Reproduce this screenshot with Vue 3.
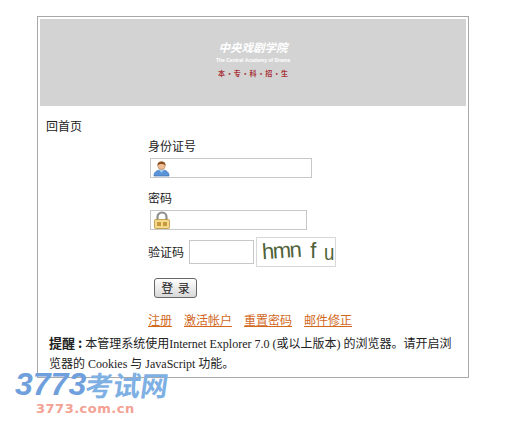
<script setup>
const links = ['注册', '激活帐户', '重置密码', '邮件修正']
const recruit = ['本', '·', '专', '·', '科', '·', '招', '·', '生']
</script>

<template>
  <div class="page">
    <div class="card">
      <header class="banner">
        <div class="school">中央戏剧学院</div>
        <div class="english">The Central Academy of Drama</div>
        <div class="recruit"><span v-for="(c, i) in recruit" :key="i">{{ c }}</span></div>
      </header>
      <a class="home">回首页</a>
      <form class="form" @submit.prevent>
        <label class="label">身份证号</label>
        <div class="field wide">
          <svg class="icon" viewBox="0 0 18 18" width="17" height="17">
            <path d="M1 17c0-4 2.500-6.500 8-6.500s8 2.500 8 6.500z" fill="#5b93d8" stroke="#3a6db0" stroke-width=".7"/>
            <path d="M6.500 10.500 9 13.500l2.500-3z" fill="#a5d2f2"/>
            <circle cx="9" cy="6" r="4" fill="#eebd94" stroke="#a8714a" stroke-width=".5"/>
            <path d="M4.800 6C4.500 2.500 6.500 1.500 9 1.500s4.500 1 4.200 4.500C12 4.500 10 4.300 9 4.300S6 4.500 4.800 6z" fill="#8c4f24"/>
          </svg>
        </div>
        <label class="label second">密码</label>
        <div class="field narrow">
          <svg class="icon" viewBox="0 0 18 18" width="18" height="18">
            <path d="M4.500 9V6a4.500 4.500 0 0 1 9 0v3" fill="none" stroke="#8f8f8f" stroke-width="2.200"/>
            <rect x="1.500" y="8.500" width="15" height="9" rx="1" fill="#f3d98c" stroke="#b88f3a" stroke-width=".8"/>
            <rect x="4" y="11" width="4" height="4" fill="#c99a3c"/>
            <rect x="10" y="11" width="4" height="4" fill="#c99a3c"/>
          </svg>
        </div>
        <div class="captcha-row">
          <label class="captcha-label">验证码</label>
          <div class="captcha-input"></div>
          <div class="captcha-image">
            <span class="c1">hmn</span><span class="c2">f</span><span class="c3">u</span>
          </div>
        </div>
        <button class="submit" type="submit">登 录</button>
        <nav class="links">
          <a v-for="link in links" :key="link" class="link">{{ link }}</a>
        </nav>
      </form>
      <p class="notice"><b>提醒 :</b> 本管理系统使用Internet Explorer 7.0 (或以上版本) 的浏览器。请开启浏览器的 Cookies 与 JavaScript 功能。</p>
    </div>
    <div class="watermark">
      <div class="wm-title"><span class="wm-num">3773</span><span class="wm-cn">考试网</span></div>
      <div class="wm-url">3773.com.cn</div>
    </div>
  </div>
</template>

<style>
html, body { margin: 0; background: #fff; }
</style>

<style scoped>
.page {
  position: relative;
  width: 527px;
  height: 433px;
  overflow: hidden;
  padding: 16px 0 0 37px;
  box-sizing: border-box;
  font-family: "Liberation Serif", "Noto Sans CJK SC", serif;
  font-size: 12px;
  color: #222;
}
.card {
  width: 432px;
  height: 362px;
  box-sizing: border-box;
  border: 1px solid #a8a8a8;
  padding: 2px;
}
.banner {
  height: 87px;
  background: #d3d3d3;
  display: flex;
  flex-direction: column;
  align-items: center;
  padding-top: 20px;
  box-sizing: border-box;
}
.school {
  color: #fff;
  font-size: 11.500px;
  font-weight: bold;
  font-style: italic;
  line-height: 16px;
  font-family: "Noto Sans CJK SC", serif;
}
.english {
  color: #fff;
  font-family: "Liberation Sans", sans-serif;
  font-size: 5px;
  font-weight: bold;
  line-height: 6px;
  margin-top: 2px;
  white-space: nowrap;
}
.recruit {
  display: flex;
  justify-content: space-between;
  width: 70px;
  color: #a8343a;
  font-family: "Noto Sans CJK SC", sans-serif;
  font-size: 7px;
  font-weight: bold;
  line-height: 10px;
  margin-top: 5px;
}
.home {
  display: block;
  margin: 12px 0 0 6px;
  font-size: 12px;
  line-height: 16px;
  font-family: "Noto Sans CJK SC", sans-serif;
}
.form {
  margin-left: 108px;
  margin-top: 4px;
  font-family: "Noto Sans CJK SC", sans-serif;
}
.label {
  display: block;
  line-height: 16px;
}
.second { margin-top: 12px; }
.field {
  margin-top: 4px;
  height: 20px;
  box-sizing: border-box;
  border: 1px solid #c8c8c8;
  display: flex;
  align-items: center;
  padding-left: 2px;
  margin-left: 2px;
}
.wide { width: 162px; }
.narrow { width: 157px; }
.icon { display: block; }
.captcha-row {
  display: flex;
  align-items: center;
  margin-top: 7px;
}
.captcha-label { line-height: 16px; width: 41px; }
.captcha-input {
  width: 65px;
  height: 24px;
  box-sizing: border-box;
  border: 1px solid #c8c8c8;
}
.captcha-image {
  width: 80px;
  height: 30px;
  box-sizing: border-box;
  border: 1px solid #d8d8d8;
  margin-left: 2px;
  color: #4f6339;
  font-family: "Liberation Sans", sans-serif;
  font-size: 22px;
  line-height: 26px;
  padding-left: 5px;
  white-space: nowrap;
  display: flex;
}
.c1 { letter-spacing: -1.500px; transform: rotate(-4deg); }
.c2 { margin-left: 10px; }
.c3 { margin-left: 7px; transform: translateY(2px) scaleX(.85); }
.submit {
  display: block;
  margin: 11px 0 0 6px;
  width: 43px;
  height: 20px;
  box-sizing: border-box;
  padding: 0;
  border: 1px solid #666;
  border-radius: 3px;
  background: linear-gradient(#ffffff, #d8d8d8);
  font-family: "Noto Sans CJK SC", sans-serif;
  font-size: 12px;
  line-height: 16px;
  word-spacing: 2px;
  color: #222;
}
.links {
  display: flex;
  gap: 12px;
  margin-top: 14px;
  line-height: 16px;
}
.link { color: #d2691e; text-decoration: underline; }
.notice {
  margin: 5px 0 0 9px;
  width: 408px;
  line-height: 20px;
}
.notice b { font-family: "Noto Sans CJK SC", sans-serif; font-size: 13px; }
.watermark {
  position: absolute;
  left: 15px;
  top: 369px;
  width: 170px;
}
.wm-title {
  display: flex;
  align-items: center;
  height: 30px;
  white-space: nowrap;
  color: #6f9fdc;
  font-weight: bold;
}
.wm-num {
  font-family: "Liberation Sans", sans-serif;
  font-size: 32px;
  font-style: italic;
  line-height: 30px;
}
.wm-cn {
  font-family: "Noto Sans CJK SC", sans-serif;
  font-size: 27.500px;
  line-height: 30px;
  color: #7fb0e4;
  transform: skewX(-8deg);
}
.wm-url {
  font-family: "DejaVu Sans", sans-serif;
  font-size: 13px;
  font-weight: bold;
  line-height: 14px;
  color: #f3a193;
  margin-left: 21px;
  margin-top: 3px;
  letter-spacing: .5px;
}
</style>
